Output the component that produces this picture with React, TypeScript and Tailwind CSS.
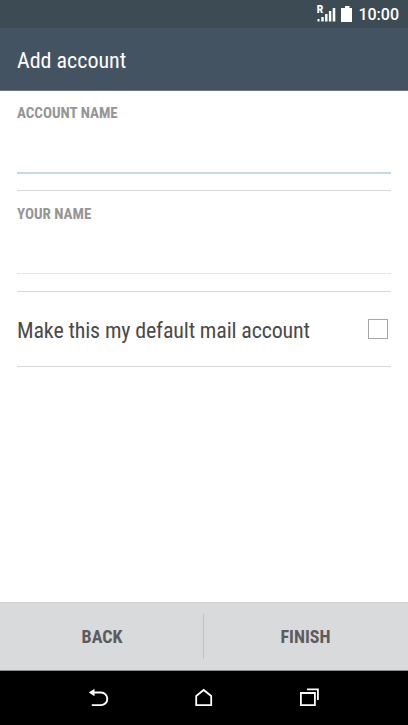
type FieldProps = {
  label: string;
  active?: boolean;
};

const StatusBar = () => {
  return (
    <div className="flex h-7 shrink-0 items-center justify-end bg-[#3d4b54] pr-[9px] text-white">
      <svg width="38" height="28" viewBox="0 0 38 28" fill="currentColor">
        <text x="0.8" y="12.8" className="font-[Roboto] text-[10px] font-black [font-stretch:100%]">
          R
        </text>
        <path d="M1.5 19h2v2.5h-2zM5.3 17h2.4v4.5H5.3zM9.1 14h2.4v7.5H9.1zM12.9 11h2.4v10.5h-2.4zM16.7 8h2.6v13.5h-2.6z" />
        <path d="M29 6h4.5v2h2.5v14h-11V8H29z" />
      </svg>
      <span className="ml-1 pt-0.5 font-[Roboto] text-[16px] leading-[26px] font-medium [font-stretch:100%]">
        10:00
      </span>
    </div>
  );
};

const Field = ({ label, active }: FieldProps) => {
  return (
    <div
      className={
        active
          ? "border-b border-[#d8d8d8] pt-3 pb-4"
          : "border-b border-[#d8d8d8] pt-[13px] pb-[17px]"
      }
    >
      <div className="text-[15px] leading-5 font-bold text-[#959595]">
        {label}
      </div>
      <div
        className={
          active
            ? "h-[51px] border-b-2 border-[#bfdbe8]"
            : "h-[50px] border-b border-[#e6e6e6]"
        }
      />
    </div>
  );
};

const NavBar = () => {
  return (
    <div className="flex h-[54px] shrink-0 items-center justify-center gap-[81px] bg-black text-white">
      <svg width="24" height="24" viewBox="0 0 24 24" fill="none" stroke="currentColor" strokeWidth="1.9">
        <path d="M6 6.5h8a6 6 0 0 1 0 12.6H4.8" />
        <path d="M1.8 6.5 7.5 2.8v7.4z" fill="currentColor" stroke="none" />
      </svg>
      <svg width="24" height="24" viewBox="0 0 24 24" fill="none" stroke="currentColor" strokeWidth="1.8">
        <path d="M4.2 10 11.7 4l7.5 6v9.1h-15z" />
      </svg>
      <svg width="24" height="24" viewBox="0 0 24 24" fill="none" stroke="currentColor" strokeWidth="1.8">
        <path d="M3.9 7h14v12.1h-14zM10 3.4h10.9V14" />
      </svg>
    </div>
  );
};

export default function App() {
  return (
    <div className="flex h-screen flex-col overflow-hidden bg-white font-['Roboto_Condensed','Roboto',sans-serif] [font-stretch:75%]">
      <StatusBar />
      <header className="flex h-[63px] shrink-0 items-center border-b border-[#6f767d] bg-[#445362] px-[17px] pt-0.5 text-[22px] text-white">
        Add account
      </header>
      <main className="flex-1 px-[17px]">
        <Field label="ACCOUNT NAME" active />
        <Field label="YOUR NAME" />
        <label className="flex h-[75px] items-center justify-between border-b border-[#d8d8d8] pr-[3px] text-[22px] tracking-[-0.16px] text-[#4a4a4a]">
          <span className="pt-0.5">Make this my default mail account</span>
          <span className="size-5 border border-[#a6a6a6]" />
        </label>
      </main>
      <footer className="flex h-[69px] shrink-0 items-center border-y border-t-[#cfd0d1] border-b-[#8c8d8e] bg-[#d9dadc] text-[18px] font-bold text-[#5c5c5c]">
        <button className="h-[45px] w-[204px] border-r border-[#c0c1c3] pl-px">BACK</button>
        <button className="h-[45px] flex-1 pr-px">FINISH</button>
      </footer>
      <NavBar />
    </div>
  );
}
